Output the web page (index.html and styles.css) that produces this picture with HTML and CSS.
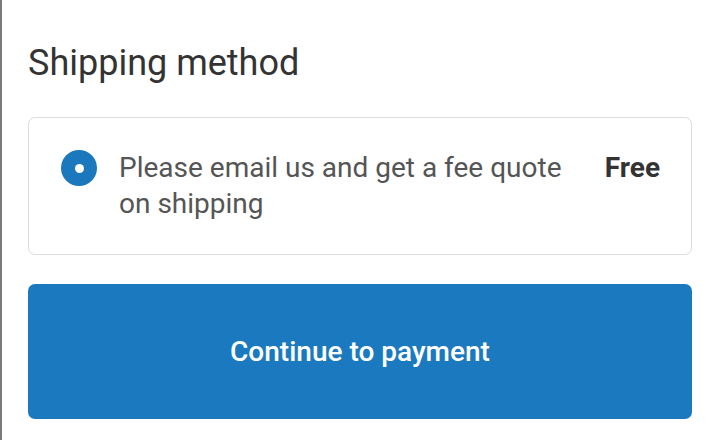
FILE: index.html
```html
<!DOCTYPE html>
<html>
<head>
<meta charset="utf-8">
<link rel="stylesheet" href="styles.css">
</head>
<body>
<div class="page">
  <h2 class="title">Shipping method</h2>
  <div class="card">
    <span class="radio"><span class="dot"></span></span>
    <span class="label">Please email us and get a fee quote on shipping</span>
    <span class="price">Free</span>
  </div>
  <button class="cta">Continue to payment</button>
</div>
</body>
</html>
```
FILE: styles.css
```css
html, body {
  margin: 0;
  padding: 0;
  background: #fff;
}
.page {
  box-sizing: border-box;
  width: 720px;
  height: 440px;
  border-left: 2px solid #7a7a7a;
  padding: 0 28px 0 26px;
  font-family: Roboto, "Noto Sans", sans-serif;
  overflow: hidden;
}
.title {
  margin: 42px 0 32px 0;
  font-size: 36px;
  line-height: 1.2;
  font-weight: 400;
  color: #333;
}
.card {
  display: flex;
  align-items: flex-start;
  border: 1.5px solid #dcdcdc;
  border-radius: 7px;
  padding: 32px 31px 32px 32px;
}
.radio {
  flex: none;
  width: 36px;
  height: 36px;
  border-radius: 50%;
  background: #1b78bd;
  display: flex;
  align-items: center;
  justify-content: center;
  margin-top: 0;
  margin-right: 22px;
}
.dot {
  width: 9px;
  height: 9px;
  border-radius: 50%;
  background: #fff;
}
.label {
  flex: 1;
  font-size: 28px;
  line-height: 36px;
  color: #555;
  padding-right: 36px;
}
.price {
  flex: none;
  font-size: 28px;
  line-height: 36px;
  font-weight: 700;
  color: #333;
}
.cta {
  display: block;
  width: 100%;
  height: 135px;
  margin-top: 29px;
  border: none;
  border-radius: 7px;
  background: #1b7abf;
  color: #fff;
  font-family: Roboto, "Noto Sans", sans-serif;
  font-size: 28px;
  font-weight: 500;
}
```
